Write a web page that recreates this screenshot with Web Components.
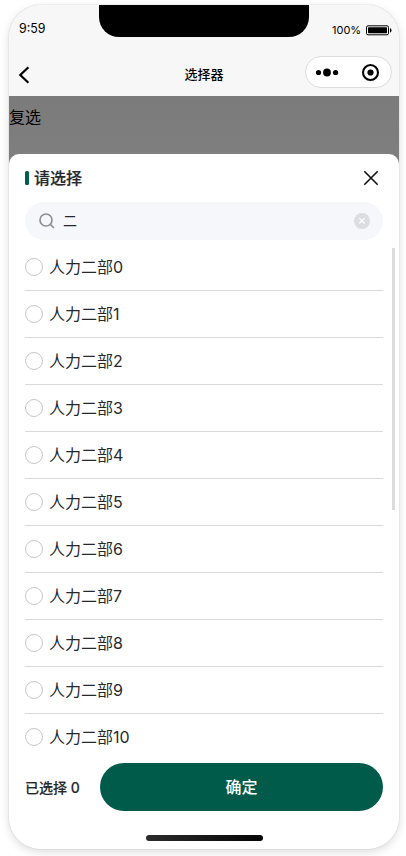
<!DOCTYPE html>
<html lang="zh-CN">
<head>
<meta charset="utf-8">
<title>选择器</title>
<style>
html,body{margin:0;height:856px;background:#fff;overflow:hidden}
body{font-family:Inter,"Noto Sans CJK SC",sans-serif;color:#26292c}
</style>
</head>
<body>
<phone-frame>
  <status-bar slot="head" time="9:59" battery="100%"></status-bar>
  <nav-bar slot="head">选择器</nav-bar>
  <page-backdrop>复选</page-backdrop>
  <picker-sheet>
    <sheet-title slot="top">请选择</sheet-title>
    <search-field slot="top">二</search-field>
    <option-row>人力二部0</option-row>
    <option-row>人力二部1</option-row>
    <option-row>人力二部2</option-row>
    <option-row>人力二部3</option-row>
    <option-row>人力二部4</option-row>
    <option-row>人力二部5</option-row>
    <option-row>人力二部6</option-row>
    <option-row>人力二部7</option-row>
    <option-row>人力二部8</option-row>
    <option-row>人力二部9</option-row>
    <option-row>人力二部10</option-row>
    <confirm-bar slot="foot" count="0">确定</confirm-bar>
  </picker-sheet>
</phone-frame>
<script>
const define = (name, html, setup) => customElements.define(name, class extends HTMLElement {
  constructor() {
    super();
    this.attachShadow({mode: 'open'}).innerHTML = '<style>*{box-sizing:border-box}</style>' + html;
  }
  connectedCallback() { if (setup) setup(this, this.shadowRoot); }
});

define('phone-frame', `<style>
:host{display:block;padding:5px 7px 0 9px}
.phone{display:flex;flex-direction:column;width:390px;height:844px;border-radius:32px;overflow:hidden;background:#f7f7f7}
.shadow{width:390px;border-radius:32px;box-shadow:0 0 1px rgba(0,0,0,.38),0 3px 10px rgba(0,0,0,.14)}
</style><div class="shadow"><div class="phone"><slot name="head"></slot><slot></slot></div></div>`);

define('status-bar', `<style>
:host{display:block;flex:none;height:44px;color:#000}
.bar{display:grid;grid-template-columns:90px 210px 90px;height:44px}
.time{font-size:12.4px;line-height:16px;padding:16px 0 0 10px}
.notch{height:32px;background:#000;border-radius:0 0 20px 20px}
.right{display:flex;align-items:center;height:50px;padding-left:23px;font-size:11px}
svg{margin-left:5px;flex:none}
</style><div class="bar"><div class="time"></div><div class="notch"></div><div class="right"><span></span>
<svg width="27" height="11" viewBox="0 0 27 11"><rect x=".5" y=".8" width="22" height="9" rx="1.5" fill="none" stroke="#000"/><rect x="2" y="2.3" width="19" height="6" rx=".8"/><path d="M24 3.2c2 .5 2 3.7 0 4.2z"/></svg></div></div>`,
(h, r) => {
  r.querySelector('.time').textContent = h.getAttribute('time');
  r.querySelector('span').textContent = h.getAttribute('battery');
});

define('nav-bar', `<style>
:host{display:block;flex:none;height:47px;color:#000}
.bar{display:grid;grid-template-columns:90px 210px 90px;height:47px;align-items:start}
.back{margin:17px 0 0 9px}
.title{font-size:13px;line-height:20px;text-align:center;margin-top:15px;font-weight:500}
.capsule{display:flex;align-items:center;width:87px;height:32px;margin:7px 0 0 -4px;border:1px solid #dcdcdc;border-radius:16px;background:#fff}
svg{display:block}
</style><div class="bar">
<svg class="back" width="12" height="18" viewBox="0 0 12 18"><path d="M10.4 1.2L2.3 9l8.1 7.8" fill="none" stroke="#000" stroke-width="2.2"/></svg>
<div class="title"><slot></slot></div>
<div class="capsule"><svg width="85" height="30" viewBox="0 0 85 30"><circle cx="12.5" cy="15.5" r="2.6"/><circle cx="21" cy="15.5" r="3.9"/><circle cx="29.6" cy="15.5" r="2.6"/><circle cx="64.5" cy="15.5" r="7.5" fill="none" stroke="#000" stroke-width="2.1"/><circle cx="64.5" cy="15.5" r="3.1"/></svg></div></div>`);

define('page-backdrop', `<style>
:host{display:block;flex:none;height:68px;background:linear-gradient(#7b7b7c,#7f7f7f);color:#000}
div{font-size:16px;line-height:24px;padding-top:9px}
</style><div><slot></slot></div>`);

define('picker-sheet', `<style>
:host{display:flex;flex-direction:column;flex:none;height:695px;margin-top:-10px;position:relative;background:#fff;border-radius:10px 10px 0 0}
.list{display:grid;grid-template-columns:358px 1fr;padding-left:16px;height:513px;overflow:hidden}
.track{padding:8px 0 0 9px}
.thumb{width:3px;height:262px;background:#dcdcdd}
.home{width:117px;height:6px;margin:24px auto 0 137px;border-radius:3px;background:linear-gradient(90deg,#2b2b2b,#050505)}
</style><slot name="top"></slot>
<div class="list"><div><slot></slot></div><div class="track"><div class="thumb"></div></div></div>
<slot name="foot"></slot><div class="home"></div>`);

define('sheet-title', `<style>
:host{display:flex;align-items:center;flex:none;height:48px;padding:0 20px 0 16px}
i{width:4px;height:14px;border-radius:1.5px;background:#00604d}
h1{flex:1;margin:0 0 0 5px;font-size:16px;line-height:24px;font-weight:500;-webkit-text-stroke:.2px currentColor}
svg{display:block}
</style><i></i><h1><slot></slot></h1><svg width="16" height="16" viewBox="0 0 16 16"><path d="M1.3 1.3l13.4 13.4M14.7 1.3L1.3 14.7" stroke="#111" stroke-width="1.6"/></svg>`);

define('search-field', `<style>
:host{display:flex;align-items:center;flex:none;height:38px;width:358px;margin-left:16px;padding:0 13px 0 14px;border-radius:19px;background:#f5f7fb;box-sizing:border-box}
span{flex:1;margin-left:8px;font-size:14px;line-height:20px}
svg{display:block}
</style><svg width="16" height="16" viewBox="0 0 16 16" fill="none" stroke="#8e9093" stroke-width="1.7"><circle cx="7" cy="7" r="6"/><path d="M11.3 11.3l3.7 3.7"/></svg>
<span><slot></slot></span>
<svg width="16" height="16" viewBox="0 0 16 16"><circle cx="8" cy="8" r="8" fill="#dcdde0"/><path d="M5.3 5.1l5.4 5.4M10.7 5.1l-5.4 5.4" stroke="#fff" stroke-width="1.2"/></svg>`);

define('option-row', `<style>
:host{display:flex;align-items:center;height:47px;border-bottom:1px solid #d9d9da;box-sizing:border-box}
:host(:first-of-type){height:51px;padding-top:4px}
i{width:18px;height:18px;border:1px solid #c6c6c7;border-radius:50%;background:#fff}
span{margin-left:6px;font-size:16px;line-height:24px}
</style><i></i><span><slot></slot></span>`);

define('confirm-bar', `<style>
:host{display:flex;align-items:center;flex:none;height:58px;padding:10px 16px 0;box-sizing:border-box}
b{width:75px;padding-top:1px;font-size:14px;line-height:20px;font-weight:500;-webkit-text-stroke:.15px currentColor}
button{flex:1;height:48px;padding:0;border:0;border-radius:24px;background:#005b4b;color:#fff;font:500 16px/24px Inter,"Noto Sans CJK SC",sans-serif}
</style><b></b><button><slot></slot></button>`,
(h, r) => { r.querySelector('b').textContent = '已选择 ' + h.getAttribute('count'); });
</script>
</body>
</html>
